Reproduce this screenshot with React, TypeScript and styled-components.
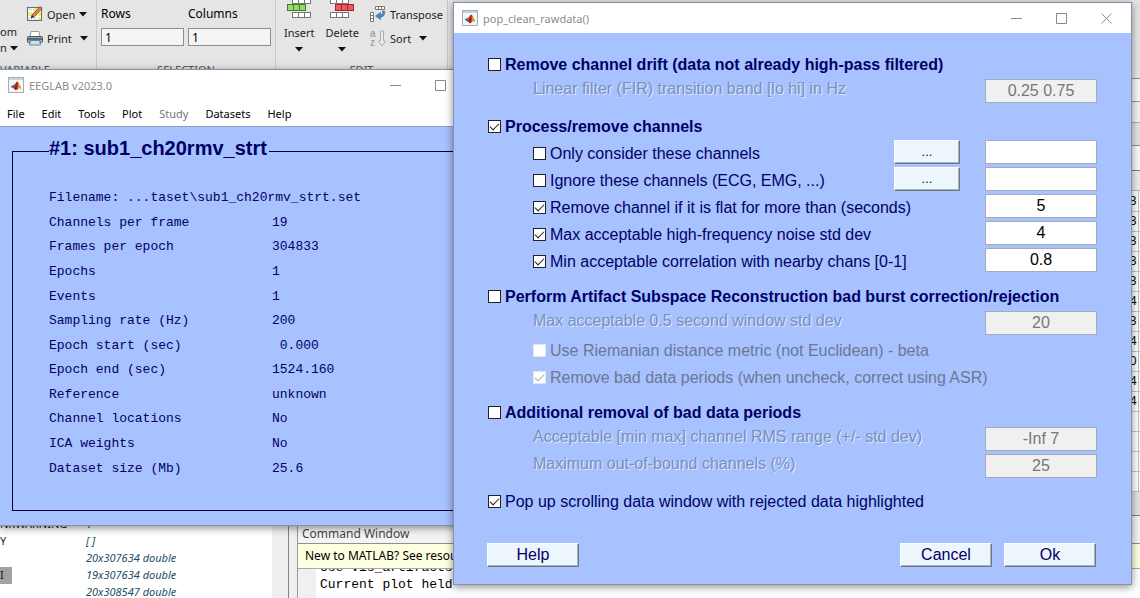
import React, { useId, useState } from "react";
import styled, { createGlobalStyle, css } from "styled-components";

const UI = '"Noto Sans", "Open Sans", sans-serif';
const ARIAL = '"Liberation Sans", Arial, sans-serif';
const MONO = '"Liberation Mono", "Courier New", monospace';
const NAVY = "#000066";
const PANEL = "#a8c2ff";

const GlobalStyle = createGlobalStyle`
  *, *::before, *::after { box-sizing: border-box; }
  body { margin: 0; font-family: ${UI}; font-size: 11px; color: #1c1c1c; }
  button, input { font: inherit; color: inherit; margin: 0; padding: 0; border-radius: 0; }
`;

const Desktop = styled.main`
  position: relative;
  min-height: 100vh;
  overflow: hidden;
  display: flex;
  flex-direction: column;
  background: #fff;
`;

/* ---------- ribbon ---------- */
const Ribbon = styled.header`
  display: flex;
  height: 79px;
  background: #e5e5e5;
  border-bottom: 1px solid #8f8f8f;
`;

const Group = styled.section<{ $width: number }>`
  display: flex;
  flex-direction: column;
  flex: none;
  width: ${(p) => p.$width}px;
  border-right: 1px solid #c9c9c9;
`;

const GroupBody = styled.div<{ $gap?: number; $left?: number }>`
  display: flex;
  flex: 1;
  gap: ${(p) => p.$gap ?? 0}px;
  padding-left: ${(p) => p.$left ?? 0}px;
`;

const GroupTitle = styled.h2<{ $start?: boolean }>`
  margin: 0;
  font-size: 11px;
  line-height: 16px;
  font-weight: 400;
  text-align: ${(p) => (p.$start ? "left" : "center")};
  color: #555;
`;

const Stack = styled.div`
  display: flex;
  flex-direction: column;
  padding-top: 2px;
`;

const PlainButton = styled.button`
  border: 0;
  background: none;
  white-space: nowrap;
`;

const ToolRow = styled(PlainButton)<{ $gap?: number }>`
  display: flex;
  align-items: center;
  gap: 4px;
  height: 24px;
  span { margin-right: ${(p) => p.$gap ?? 0}px; }
`;

const BigTool = styled(PlainButton)`
  display: flex;
  flex-direction: column;
  align-items: center;
  line-height: 16px;
  gap: 6px;
  height: 54px;
`;

const FromTool = styled(PlainButton)`
  width: 18px;
  padding-top: 24px;
  text-align: left;
  line-height: 16px;
  align-self: flex-start;
  div { display: flex; align-items: center; gap: 3px; }
`;

const SizeField = styled.label`
  display: flex;
  flex-direction: column;
  gap: 5px;
  padding-top: 5px;
  font-size: 12px;
  line-height: 18px;
  color: #000;
  input {
    width: 83px;
    height: 18px;
    padding: 0 3px;
    border: 1px solid #8e8e8e;
    background: #f5f5f5;
    line-height: 16px;
  }
`;

/* ---------- editor and lower panels ---------- */
const Editor = styled.section`
  background: #fafafa;
  display: flex;
  flex-direction: column;
`;

const Band = styled.div<{ $h: number; $bg: string; $line: string }>`
  height: ${(p) => p.$h}px;
  background: ${(p) => p.$bg};
  border-bottom: 1px solid ${(p) => p.$line};
`;

const Cells = styled.table`
  width: 100%;
  border-collapse: collapse;
  background: #fff;
  td {
    height: 20px;
    padding: 0;
    padding-right: 1px;
    border-bottom: 1px solid #c0c0c0;
    border-right: 1px solid #c0c0c0;
    font-size: 12px;
    line-height: 18px;
    text-align: right;
    color: #000;
  }
  td:last-child { width: 2px; border-right: 0; }
`;

const Lower = styled.div`
  display: flex;
  flex: 1;
  background: #efefef;
`;

const Workspace = styled.section`
  flex: none;
  width: 272px;
  background: #fff;
  overflow: hidden;
`;

const WorkTable = styled.table`
  border-collapse: collapse;
  width: 100%;
  td { height: 17px; padding: 0; line-height: 16px; white-space: nowrap; }
  td:first-child { width: 86px; }
  td:last-child { font-style: italic; color: #1e4e66; }
`;

const Selected = styled.span`
  display: inline-block;
  width: 12px;
  height: 17px;
  background: #a2a2a2;
  color: #111133;
  vertical-align: top;
`;

const Splitter = styled.div`
  flex: none;
  width: 25px;
  background: linear-gradient(to right, #efefef 16px, #848484 16px, #848484 17px, #efefef 17px);
`;

const Command = styled.section`
  flex: 1;
  display: flex;
  flex-direction: column;
  border-left: 1px solid #9a9a9a;
  background: #fff;
  font-size: 12px;
  h2 {
    margin: 0;
    padding: 9px 4px 0;
    height: 28px;
    font-size: 12px;
    line-height: 18px;
    font-weight: 400;
    color: #444;
    background: #f4f4f4;
    border-bottom: 1px solid #8f8f8f;
  }
  p {
    margin: 0;
    padding-left: 7px;
    height: 25px;
    line-height: 24px;
    color: #000;
    background: #ffffe1;
    border-bottom: 1px solid #a8a8a8;
  }
`;

const Console = styled.div`
  flex: 1;
  border-left: 18px solid #f0f0f0;
  padding-left: 4px;
  height: 30px;
  display: flex;
  flex-direction: column;
  justify-content: flex-start;
  overflow: hidden;
  pre { margin: -10px 0 0; font: 13px/17px ${MONO}; color: #000; }
`;

/* ---------- floating windows ---------- */
const windowFrame = css`
  position: absolute;
  background: ${PANEL};
  border: 1px solid #8592ad;
  box-shadow: 0 2px 8px rgba(0, 0, 0, 0.45);
`;

const EegWindow = styled.section`
  ${windowFrame}
  left: -1px;
  top: 69px;
  width: 512px;
`;

const Dialog = styled.form`
  ${windowFrame}
  left: 453px;
  right: 8px;
  top: 2px;
  min-width: 640px;
  color: ${NAVY};
  font-family: ${ARIAL};
  font-size: 16px;
`;

const TitleBar = styled.header`
  display: flex;
  align-items: center;
  height: 30px;
  padding: 0 2px 0 8px;
  background: #fff;
  font-family: ${UI};
  font-size: 11px;
  color: #8c8c8c;
  h1 { margin: 0 auto 0 5px; font-size: 11px; font-weight: 400; }
`;

const WinButton = styled.button`
  display: grid;
  place-items: center;
  width: 45px;
  height: 28px;
  border: 0;
  background: none;
`;

const MenuBar = styled.nav`
  display: flex;
  gap: 17px;
  height: 27px;
  padding-left: 7px;
  background: #fff;
  border-bottom: 1px solid #8fa0c4;
`;

const MenuItem = styled(PlainButton)`
  height: 26px;
  color: #000;
  &:disabled { color: #777; }
`;

const EegBody = styled.div`
  padding: 11px 12px 14px;
`;

const Frame = styled.fieldset`
  margin: 0;
  padding: 22px 0 29px 36px;
  border: 1px solid #00002e;
  color: ${NAVY};
  legend {
    padding: 0 2px 6px 0;
    font: bold 20px/20px ${ARIAL};
  }
`;

const Info = styled.table`
  height: 295px;
  border-collapse: collapse;
  font: 13px/16px ${MONO};
  td { padding: 0; white-space: pre; }
  td:first-child { width: 223px; }
`;

const DialogBody = styled.div`
  display: flex;
  flex-direction: column;
  gap: 8px;
  padding: 18px 34px 17px;
`;

const Section = styled.div`
  display: flex;
  flex-direction: column;
`;

const Line = styled.div<{ $sub?: boolean }>`
  display: flex;
  align-items: center;
  gap: 25px;
  height: 27px;
  padding-left: ${(p) => (p.$sub ? 45 : 0)}px;
`;

const CheckLabel = styled.label<{ $bold?: boolean; $off?: boolean }>`
  display: flex;
  align-items: center;
  gap: 4px;
  margin-right: auto;
  white-space: nowrap;
  font-weight: ${(p) => (p.$bold ? 700 : 400)};
  color: ${(p) => (p.$off ? "#6b7894" : NAVY)};
`;

const CheckBox = styled.input`
  appearance: none;
  display: grid;
  place-items: center;
  width: 13px;
  height: 13px;
  border: 1px solid #222;
  background: #fff;
  &:checked::after {
    content: "";
    width: 9px;
    height: 5px;
    margin-bottom: 3px;
    border-left: 1px solid #222;
    border-bottom: 1px solid #222;
    transform: rotate(-45deg);
  }
  &:disabled { border-color: #dde4f2; }
  &:disabled:checked::after { border-color: #aaa; }
`;

const StaticLabel = styled.label`
  margin-right: auto;
  padding-bottom: 6px;
  white-space: nowrap;
  color: #7b90b8;
  text-shadow: 1px 1px 0 #dde8ff;
`;

const Field = styled.input`
  flex: none;
  width: 112px;
  height: 24px;
  margin-bottom: 3px;
  border: 1px solid #a3abbd;
  background: #fff;
  color: #000;
  text-align: center;
  &:disabled { margin-bottom: 2px; background: #f0f0f0; color: #777; }
`;

const PushButton = styled.button<{ $narrow?: boolean }>`
  flex: none;
  width: ${(p) => (p.$narrow ? 66 : 92)}px;
  height: 24px;
  margin-bottom: ${(p) => (p.$narrow ? 3 : 0)}px;
  border: 1px solid;
  border-color: #fff #6d7680 #6d7680 #fff;
  box-shadow: inset -1px -1px 0 #a9b3bd;
  background: #edf5fd;
  color: ${NAVY};
  line-height: 22px;
  font-size: ${(p) => (p.$narrow ? 13 : 16)}px;
`;

const Actions = styled.footer`
  display: flex;
  gap: 12px;
  margin: 20px 1px 0 -1px;
  button:first-child { margin-right: auto; }
`;

/* ---------- drawings ---------- */
const Arrow = () => (
  <svg width="8" height="5" viewBox="0 0 8 5" aria-hidden="true"><path d="M0 0h8L4 4.5z" fill="#111" /></svg>
);

const MatlabIcon = () => (
  <svg width="16" height="16" viewBox="0 0 16 16" aria-hidden="true">
    <rect x=".5" y=".5" width="15" height="15" fill="#f4f6f9" stroke="#a3adb8" />
    <path d="M1 1h14v2H1z" fill="#c5d3e2" />
    <path d="M2.500 9.500l2.500-1.200L7.500 7 6 11.500 4.500 11z" fill="#3c6f9c" />
    <path d="M5 9c2-1 3-4.500 4-4.500 1.500 0 2.700 4.500 4.500 7.500-1.800-1.300-2.700-1.300-3.500 0-.8 1-1.700 1.300-2.200 1.300S6.700 11.800 5.500 11.300z" fill="#c8421f" />
    <path d="M9 4.500c-.5 2.500-1 5-2.800 6.900 1 .3 1.300 1.400 1.800 1.800.8-2 1.300-4.500 1-8.700z" fill="#7a1d16" />
    <path d="M10 6c1 2 1.800 4 3 5.300-1.300-.7-2.200-.3-2.800.5z" fill="#f0a030" />
  </svg>
);

const OpenIcon = () => (
  <svg width="16" height="16" viewBox="0 0 16 16" aria-hidden="true">
    <rect x=".5" y="1.500" width="14" height="13" fill="#f5e97c" stroke="#5f6f78" />
    <path d="M5.500 2v12M10.500 2v12M1 5.500h13M1 10.500h13" stroke="#fff" />
    <path d="M1 2h4v3H1zM1 11h4v3H1zM6 11h4v3H6z" fill="#d5e8f4" />
    <path d="M4 12l1-3L13 .5l2 2L7 11z" fill="#d98a3d" stroke="#6a3a17" strokeWidth=".7" />
    <path d="M4 12l1-3 2 2z" fill="#333" />
  </svg>
);

const PrintIcon = () => (
  <svg width="16" height="15" viewBox="0 0 16 15" aria-hidden="true">
    <path d="M4 .5h8l1 5.500H3z" fill="#fff" stroke="#7b8790" strokeWidth=".8" />
    <rect x=".5" y="5.500" width="15" height="6" rx="1" fill="#9aa6ad" stroke="#4f5b63" />
    <path d="M1 7h14v2H1z" fill="#5d6870" />
    <path d="M3.500 9.500h9l1 4.500h-11z" fill="#c6e2f5" stroke="#587183" strokeWidth=".8" />
  </svg>
);

const RowsIcon = ({ fill, edge, shift }: { fill: string; edge: string; shift: boolean }) => (
  <svg width="24" height="19" viewBox="0 0 24 19" aria-hidden="true">
    {[-2, 12].map((y) => (
      <g key={y} fill="#fff" stroke="#777">
        {[0, 1, 2].map((i) => (
          <rect key={i} x={(shift ? 0.5 : 5.5) + i * 6} y={y + 0.5} width="6" height="5" />
        ))}
      </g>
    ))}
    <g fill={fill} stroke={edge}>
      {[0, 1, 2].map((i) => (
        <rect key={i} x={(shift ? 5.5 : 0.5) + i * 6} y="4.5" width="6" height="6" />
      ))}
    </g>
  </svg>
);

const TransposeIcon = () => (
  <svg width="16" height="16" viewBox="0 0 16 16" aria-hidden="true">
    <g fill="#fff" stroke="#6a6a6a" strokeWidth=".9">
      <path d="M5.500.5h9v3h-9zM8.500.5v3M11.500.5v3M.5 6.500h3v9h-3zM.5 9.500h3M.5 12.500h3" />
    </g>
    <path d="M14.500 5c.8 4-1.500 6-4 6v2.500L5.500 10l5-3.500V9c1.500 0 2.500-1.500 2-4z" fill="#4c8cc4" stroke="#2f6294" strokeWidth=".6" />
  </svg>
);

const SortIcon = () => (
  <svg width="16" height="17" viewBox="0 0 16 17" aria-hidden="true">
    <text x="0" y="7" fontSize="10" fontWeight="700" fill="#a8a8a8" fontFamily="Liberation Sans">a</text>
    <text x="0" y="16" fontSize="10" fontWeight="700" fill="#a8a8a8" fontFamily="Liberation Sans">z</text>
    <path d="M10.500 1h3v10h2l-3.500 5-3.500-5h2z" fill="#eee" stroke="#aaa" />
  </svg>
);

const MinIcon = () => (
  <svg width="11" height="11" viewBox="0 0 11 11" aria-hidden="true"><path d="M0 5.500h11" stroke="#8a8a8a" /></svg>
);
const MaxIcon = () => (
  <svg width="11" height="11" viewBox="0 0 11 11" aria-hidden="true"><path d="M.5.5h10v10H.5z" fill="none" stroke="#8a8a8a" /></svg>
);
const CloseIcon = () => (
  <svg width="11" height="11" viewBox="0 0 11 11" aria-hidden="true"><path d="M.5.5l10 10M10.500.5l-10 10" stroke="#8a8a8a" /></svg>
);

/* ---------- parts ---------- */
const WindowTitle = ({ title }: { title: string }) => (
  <TitleBar>
    <MatlabIcon />
    <h1>{title}</h1>
    <WinButton type="button" aria-label="Minimize"><MinIcon /></WinButton>
    <WinButton type="button" aria-label="Maximize"><MaxIcon /></WinButton>
    <WinButton type="button" aria-label="Close"><CloseIcon /></WinButton>
  </TitleBar>
);

type OptionProps = {
  text: string;
  checked?: boolean;
  bold?: boolean;
  off?: boolean;
  sub?: boolean;
  browse?: boolean;
  value?: string;
};

const Option = ({ text, checked = false, bold, off, sub, browse, value }: OptionProps) => {
  const [on, setOn] = useState(checked);
  return (
    <Line $sub={sub}>
      <CheckLabel $bold={bold} $off={off}>
        <CheckBox type="checkbox" checked={on} disabled={off} onChange={() => setOn(!on)} />
        {text}
      </CheckLabel>
      {browse && <PushButton type="button" $narrow aria-label={`Browse: ${text}`}>...</PushButton>}
      {value !== undefined && <Field type="text" defaultValue={value} aria-label={text} />}
    </Line>
  );
};

const Setting = ({ text, value }: { text: string; value: string }) => {
  const id = useId();
  return (
    <Line $sub>
      <StaticLabel htmlFor={id}>{text}</StaticLabel>
      <Field id={id} type="text" defaultValue={value} disabled />
    </Line>
  );
};

const INFO: [string, string][] = [
  ["Channels per frame", "19"],
  ["Frames per epoch", "304833"],
  ["Epochs", "1"],
  ["Events", "1"],
  ["Sampling rate (Hz)", "200"],
  ["Epoch start (sec)", " 0.000"],
  ["Epoch end (sec)", "1524.160"],
  ["Reference", "unknown"],
  ["Channel locations", "No"],
  ["ICA weights", "No"],
  ["Dataset size (Mb)", "25.6"],
];

const MENUS = ["File", "Edit", "Tools", "Plot", "Study", "Datasets", "Help"];
const CELLS = ["3", "3", "3", "3", "3", "4", "3", "4", "0", "4", "4", "", "", "", ""];
const VALUES = ["20x307634 double", "19x307634 double", "20x308547 double"];

export default function App() {
  return (
    <Desktop>
      <GlobalStyle />
      <Ribbon>
        <Group $width={97}>
          <GroupBody $gap={9}>
            <FromTool type="button">
              <div>om</div>
              <div>n <Arrow /></div>
            </FromTool>
            <Stack>
              <ToolRow type="button"><OpenIcon /><span>Open</span><Arrow /></ToolRow>
              <ToolRow type="button" $gap={4}><PrintIcon /><span>Print</span><Arrow /></ToolRow>
            </Stack>
          </GroupBody>
          <GroupTitle $start>VARIABLE</GroupTitle>
        </Group>
        <Group $width={179}>
          <GroupBody $gap={4} $left={4}>
            <SizeField>Rows<input type="text" defaultValue="1" /></SizeField>
            <SizeField>Columns<input type="text" defaultValue="1" /></SizeField>
          </GroupBody>
          <GroupTitle>SELECTION</GroupTitle>
        </Group>
        <Group $width={172}>
          <GroupBody $gap={11} $left={8}>
            <BigTool type="button"><RowsIcon fill="#96dc6c" edge="#3f7f2c" shift={false} /><span>Insert</span><Arrow /></BigTool>
            <BigTool type="button"><RowsIcon fill="#ee5a5a" edge="#a3262c" shift /><span>Delete</span><Arrow /></BigTool>
            <Stack>
              <ToolRow type="button"><TransposeIcon /><span>Transpose</span></ToolRow>
              <ToolRow type="button" $gap={4}><SortIcon /><span>Sort</span><Arrow /></ToolRow>
            </Stack>
          </GroupBody>
          <GroupTitle>EDIT</GroupTitle>
        </Group>
      </Ribbon>

      <Editor aria-label="Variables">
        <Band $h={23} $bg="#f7f7f7" $line="#9a9a9a" />
        <Band $h={21} $bg="#f2f2f2" $line="#adadad" />
        <Band $h={23} $bg="#e4e4e4" $line="#8f8f8f" />
        <Band $h={25} $bg="#fafafa" $line="#7d7d7d" />
        <Band $h={20} $bg="#ececec" $line="#b5b5b5" />
        <Cells>
          <tbody>
            {CELLS.map((c, i) => (
              <tr key={i}><td>{c}</td><td /></tr>
            ))}
          </tbody>
        </Cells>
        <Band $h={24} $bg="#e2e2e2" $line="#7d7d7d" />
      </Editor>

      <Lower>
        <Workspace aria-label="Workspace">
          <WorkTable>
            <tbody>
              <tr><td>NKWARNING</td><td>1</td></tr>
              <tr><td>Y</td><td>[ ]</td></tr>
              {VALUES.map((v, i) => (
                <tr key={v}><td>{i === 1 && <Selected>I</Selected>}</td><td>{v}</td></tr>
              ))}
            </tbody>
          </WorkTable>
        </Workspace>
        <Splitter />
        <Command>
          <h2>Command Window</h2>
          <p>New to MATLAB? See resour</p>
          <Console>
            <pre>{"Use vis_artifacts\nCurrent plot held"}</pre>
          </Console>
        </Command>
      </Lower>

      <EegWindow>
        <WindowTitle title="EEGLAB v2023.0" />
        <MenuBar>
          {MENUS.map((m) => (
            <MenuItem key={m} type="button" disabled={m === "Study"}>{m}</MenuItem>
          ))}
        </MenuBar>
        <EegBody>
          <Frame>
            <legend>#1: sub1_ch20rmv_strt</legend>
            <Info>
              <tbody>
                <tr><td colSpan={2}>{"Filename: ...taset\\sub1_ch20rmv_strt.set"}</td></tr>
                {INFO.map(([k, v]) => (
                  <tr key={k}><td>{k}</td><td>{v}</td></tr>
                ))}
              </tbody>
            </Info>
          </Frame>
        </EegBody>
      </EegWindow>

      <Dialog onSubmit={(e) => e.preventDefault()}>
        <WindowTitle title="pop_clean_rawdata()" />
        <DialogBody>
          <Section>
            <Option bold text="Remove channel drift (data not already high-pass filtered)" />
            <Setting text="Linear filter (FIR) transition band [lo hi] in Hz" value="0.25 0.75" />
          </Section>
          <Section>
            <Option bold checked text="Process/remove channels" />
            <Option sub browse value="" text="Only consider these channels" />
            <Option sub browse value="" text="Ignore these channels (ECG, EMG, ...)" />
            <Option sub checked value="5" text="Remove channel if it is flat for more than (seconds)" />
            <Option sub checked value="4" text="Max acceptable high-frequency noise std dev" />
            <Option sub checked value="0.8" text="Min acceptable correlation with nearby chans [0-1]" />
          </Section>
          <Section>
            <Option bold text="Perform Artifact Subspace Reconstruction bad burst correction/rejection" />
            <Setting text="Max acceptable 0.5 second window std dev" value="20" />
            <Option sub off text="Use Riemanian distance metric (not Euclidean) - beta" />
            <Option sub off checked text="Remove bad data periods (when uncheck, correct using ASR)" />
          </Section>
          <Section>
            <Option bold text="Additional removal of bad data periods" />
            <Setting text="Acceptable [min max] channel RMS range (+/- std dev)" value="-Inf 7" />
            <Setting text="Maximum out-of-bound channels (%)" value="25" />
          </Section>
          <Section>
            <Option checked text="Pop up scrolling data window with rejected data highlighted" />
          </Section>
          <Actions>
            <PushButton type="button">Help</PushButton>
            <PushButton type="button">Cancel</PushButton>
            <PushButton type="submit">Ok</PushButton>
          </Actions>
        </DialogBody>
      </Dialog>
    </Desktop>
  );
}
